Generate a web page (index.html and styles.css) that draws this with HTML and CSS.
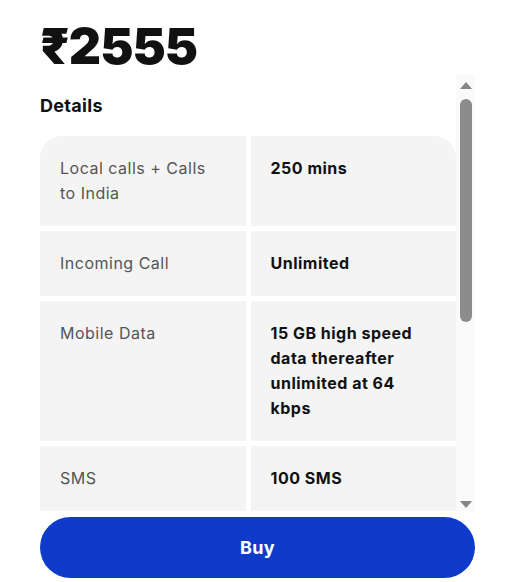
FILE: index.html
```html
<!DOCTYPE html>
<html lang="en">

<head>
    <meta charset="UTF-8">
    <meta name="viewport" content="width=device-width, initial-scale=1.0">
    <title>Plan Details</title>
    <link rel="stylesheet" href="styles.css">
</head>

<body>
    <div class="plan">
        <div class="price">₹2555</div>
        <div class="details">
            <div class="details-body">
                <h2>Details</h2>
                <div class="benefits">
                    <div class="cell label first-left">Local calls + Calls to India</div>
                    <div class="cell value first-right">250 mins</div>
                    <div class="cell label">Incoming Call</div>
                    <div class="cell value">Unlimited</div>
                    <div class="cell label">Mobile Data</div>
                    <div class="cell value">15 GB high speed data thereafter unlimited at 64 kbps</div>
                    <div class="cell label">SMS</div>
                    <div class="cell value">100 SMS</div>
                </div>
            </div>
            <!-- fake scrollbar, headless chrome hides the real one -->
            <div class="scrollbar">
                <span class="arrow up"></span>
                <span class="thumb"></span>
                <span class="arrow down"></span>
            </div>
        </div>
        <button type="button" class="buy">Buy</button>
    </div>
</body>

</html>
```

FILE: styles.css
```css
body {
    font-family: Inter, "Noto Sans", sans-serif;
    margin: 0;
    padding: 0;
    background-color: #fff;
    color: #111;
}

.plan {
    padding: 0 39px 0 40px;
}

.price {
    font-size: 50px;
    font-weight: 900;
    letter-spacing: -1px;
    line-height: 60px;
    padding-top: 16px;
    height: 59px;
}

.details {
    display: flex;
    height: 436px;
}

.details-body {
    flex: 1;
    overflow: hidden;
}

.details h2 {
    font-size: 18px;
    font-weight: 700;
    letter-spacing: 0.3px;
    line-height: 22px;
    margin: 20px 0 19px;
}

.benefits {
    display: grid;
    grid-template-columns: 1fr 1fr;
    gap: 5px;
}

.cell {
    background-color: #f4f4f4;
    padding: 20px 30px 20px 20px;
    font-size: 16px;
    line-height: 25px;
    letter-spacing: 0.5px;
}

.label {
    color: #555;
}

.value {
    font-weight: 700;
    color: #111;
}

.first-left {
    border-top-left-radius: 22px;
}

.first-right {
    border-top-right-radius: 22px;
}

.scrollbar {
    width: 19px;
    background-color: #fafafa;
    display: flex;
    flex-direction: column;
    align-items: center;
}

.arrow {
    width: 0;
    height: 0;
    border-left: 6px solid transparent;
    border-right: 6px solid transparent;
}

.arrow.up {
    border-bottom: 7px solid #858585;
    margin-top: 7px;
}

.arrow.down {
    border-top: 7px solid #858585;
    margin-top: auto;
    margin-bottom: 3px;
}

.thumb {
    width: 12px;
    height: 223px;
    margin-top: 10px;
    border-radius: 6px;
    background-color: #8c8c8c;
}

.buy {
    display: block;
    width: 100%;
    height: 61px;
    margin-top: 6px;
    border: none;
    border-radius: 31px;
    background-color: #0e3bc9;
    color: #fff;
    font-family: Inter, "Noto Sans", sans-serif;
    font-size: 18px;
    font-weight: 700;
    letter-spacing: 0.3px;
    cursor: pointer;
}
```
